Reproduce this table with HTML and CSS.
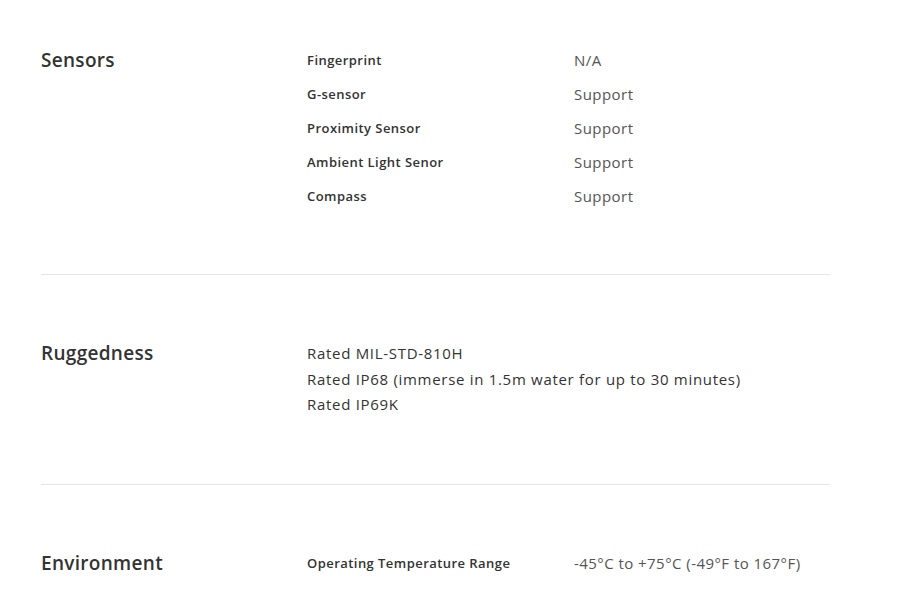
FILE: index.html
```html
<!DOCTYPE html>
<html lang="en">
<head>
<meta charset="utf-8">
<title>Specifications</title>
<link rel="stylesheet" href="styles.css">
</head>
<body>
<main class="specs">
  <section class="spec-section spec-first">
    <h2 class="spec-title">Sensors</h2>
    <div class="spec-table">
      <div class="spec-row"><span class="spec-label">Fingerprint</span><span class="spec-value">N/A</span></div>
      <div class="spec-row"><span class="spec-label">G-sensor</span><span class="spec-value">Support</span></div>
      <div class="spec-row"><span class="spec-label">Proximity Sensor</span><span class="spec-value">Support</span></div>
      <div class="spec-row"><span class="spec-label">Ambient Light Senor</span><span class="spec-value">Support</span></div>
      <div class="spec-row"><span class="spec-label">Compass</span><span class="spec-value">Support</span></div>
    </div>
  </section>
  <section class="spec-section">
    <h2 class="spec-title spec-title-text">Ruggedness</h2>
    <div class="spec-text">
      <p>Rated MIL-STD-810H</p>
      <p>Rated IP68 (immerse in 1.5m water for up to 30 minutes)</p>
      <p>Rated IP69K</p>
    </div>
  </section>
  <section class="spec-section">
    <h2 class="spec-title">Environment</h2>
    <div class="spec-table">
      <div class="spec-row"><span class="spec-label">Operating Temperature Range</span><span class="spec-value">-45°C to +75°C (-49°F to 167°F)</span></div>
    </div>
  </section>
</main>
</body>
</html>
```
FILE: styles.css
```css
html, body {
  margin: 0;
  padding: 0;
  background: #ffffff;
}
body {
  font-family: "Open Sans", "DejaVu Sans", sans-serif;
  color: #333333;
}
.specs {
  width: 789px;
  margin-left: 41px;
}
.spec-section {
  display: flex;
  padding: 66px 0;
  border-bottom: 1px solid #e6e6e6;
}
.spec-first {
  padding-top: 48px;
}
.spec-section:last-child {
  border-bottom: none;
}
.spec-title {
  width: 266px;
  flex: none;
  margin: 0;
  font-size: 19px;
  font-weight: 600;
  letter-spacing: 0.3px;
  line-height: 24px;
  color: #333333;
}
.spec-title-text {
  line-height: 25px;
}
.spec-table {
  display: flex;
  flex-direction: column;
  gap: 10px;
}
.spec-row {
  display: flex;
  line-height: 24px;
}
.spec-label {
  width: 267px;
  flex: none;
  font-size: 13px;
  font-weight: 600;
  letter-spacing: 0.45px;
  color: #333333;
}
.spec-value {
  font-size: 15px;
  letter-spacing: 0.45px;
  color: #555555;
}
.spec-text p {
  margin: 0;
  font-size: 15px;
  letter-spacing: 0.7px;
  line-height: 25.5px;
  color: #333333;
}
```
